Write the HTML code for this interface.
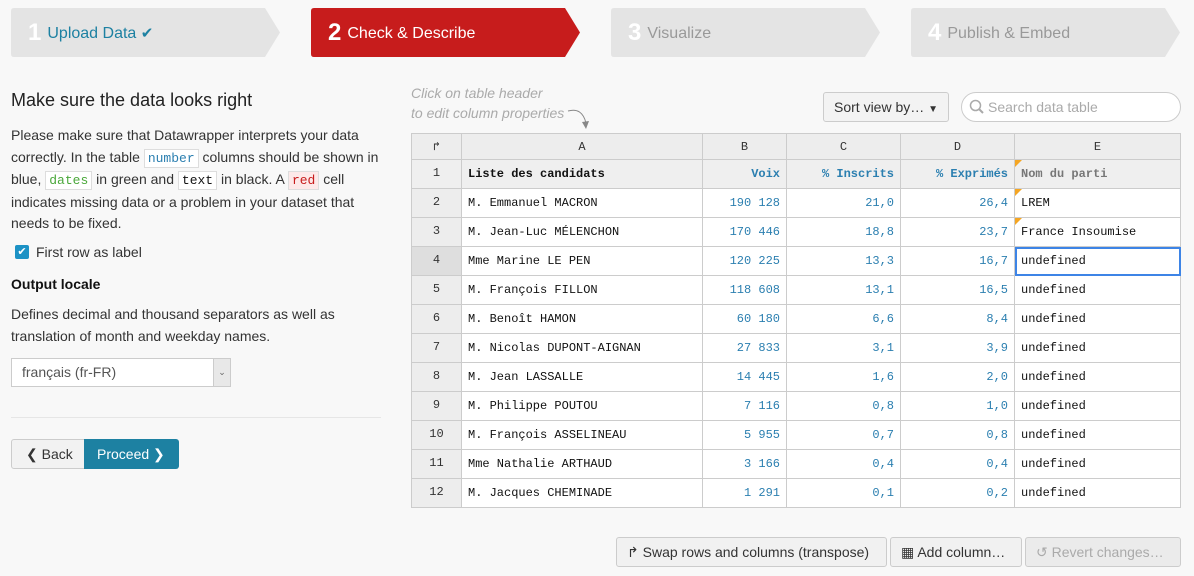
<!DOCTYPE html>
<html><head><meta charset="utf-8"><style>
*{box-sizing:border-box}
body{margin:0;width:1194px;height:576px;background:#f8f8f8;font-family:"Liberation Sans",sans-serif;color:#333;position:relative;overflow:hidden}
.step{position:absolute;top:8px;height:49px;width:269px}
.step svg{position:absolute;left:0;top:0}
.step .t{position:absolute;left:17px;top:0;line-height:50px;font-size:16px;white-space:nowrap}
.step .n{font-size:24px;font-weight:bold;color:#fff;margin-right:6px;vertical-align:-2px}
.g .t{color:#999}
.abs{position:absolute}
code{font-family:"Liberation Mono",monospace;font-size:13px;border:1px solid #ddd;background:#fff;padding:1px 3px}
table{position:absolute;left:411px;top:133px;border-collapse:collapse;font-family:"Liberation Mono",monospace;font-size:12px;table-layout:fixed}
td{border:1px solid #ccc;height:29px;padding:0 6px;background:#fff;color:#111;white-space:nowrap;position:relative}
tr.h td{height:26px;background:#ededed;text-align:center;color:#333}
td.rn{background:#ededed;text-align:center;color:#333;vertical-align:top;padding-top:6px}
td.num{color:#2b7fb0;text-align:right}
tr.r1 td{background:#efefef;font-weight:bold}
tr.r1 td.num{color:#2b7fb0}
.tri{position:absolute;left:0;top:0;width:0;height:0;border-top:7px solid #f5a623;border-right:7px solid transparent}
.btn{position:absolute;height:30px;border:1px solid #ccc;border-radius:3px;background:#f1f1f1;font-size:14px;line-height:28px;padding:0 10px;color:#333;white-space:nowrap}
</style></head><body>

<div class="step" style="left:11px"><svg width="270" height="50"><path d="M3 0H254L269 24.5L254 49H3Q0 49 0 46V3Q0 0 3 0Z" fill="#e4e4e4"/></svg><div class="t" style="color:#1d81a2"><span class="n">1</span>Upload Data <span style="font-size:15px">✔</span></div></div>
<div class="step" style="left:311px"><svg width="270" height="50"><path d="M3 0H254L269 24.5L254 49H3Q0 49 0 46V3Q0 0 3 0Z" fill="#c71c1c"/></svg><div class="t" style="color:#fff"><span class="n">2</span>Check &amp; Describe</div></div>
<div class="step g" style="left:611px"><svg width="270" height="50"><path d="M3 0H254L269 24.5L254 49H3Q0 49 0 46V3Q0 0 3 0Z" fill="#e4e4e4"/></svg><div class="t"><span class="n">3</span>Visualize</div></div>
<div class="step g" style="left:911px"><svg width="270" height="50"><path d="M3 0H254L269 24.5L254 49H3Q0 49 0 46V3Q0 0 3 0Z" fill="#e4e4e4"/></svg><div class="t"><span class="n">4</span>Publish &amp; Embed</div></div>

<div class="abs" style="left:11px;top:90px;font-size:18px;color:#222">Make sure the data looks right</div>
<div class="abs" style="left:11px;top:125px;width:375px;font-size:14px;line-height:21.5px;color:#333">Please make sure that Datawrapper interprets your data correctly. In the table <code style="color:#2b7fb0">number</code> columns should be shown in blue, <code style="color:#4aa83a">dates</code> in green and <code style="color:#111">text</code> in black. A <code style="color:#c71c1c;background:#fde9e9">red</code> cell indicates missing data or a problem in your dataset that needs to be fixed.</div>
<div class="abs" style="left:15px;top:245px;width:14px;height:14px;background:#1d92c5;border-radius:2px;color:#fff;font-size:11px;line-height:14px;text-align:center">✔</div>
<div class="abs" style="left:36px;top:244px;font-size:14px">First row as label</div>
<div class="abs" style="left:11px;top:276px;font-size:14px;font-weight:bold;color:#111">Output locale</div>
<div class="abs" style="left:11px;top:304px;font-size:14px;line-height:21.5px">Defines decimal and thousand separators as well as<br>translation of month and weekday names.</div>
<div class="abs" style="left:11px;top:358px;width:220px;height:29px;border:1px solid #ccc;background:#fff;font-size:14px;line-height:27px;padding-left:10px;color:#555">français (fr-FR)<div class="abs" style="right:0;top:0;width:17px;height:27px;background:#e8e8e8;border-left:1px solid #ccc;font-size:9px;text-align:center;color:#666">⌄</div></div>
<div class="abs" style="left:11px;top:417px;width:370px;border-top:1px solid #e6e6e6"></div>
<div class="abs" style="left:11px;top:439px;width:74px;height:30px;border:1px solid #ccc;border-radius:3px 0 0 3px;background:#f2f2f2;font-size:14px;line-height:28px;padding-left:14px">❮ Back</div>
<div class="abs" style="left:84px;top:439px;width:95px;height:30px;border-radius:0 3px 3px 0;background:#1d81a2;color:#fff;font-size:14px;line-height:30px;padding-left:13px">Proceed ❯</div>

<div class="abs" style="left:411px;top:83px;font-size:14px;line-height:20px;color:#aaa;font-style:italic">Click on table header<br>to edit column properties</div>
<svg class="abs" style="left:566px;top:105px" width="28" height="26"><path d="M2 6Q16 2 20 18" stroke="#888" fill="none"/><path d="M16 17L20 24L23 16Z" fill="#888"/></svg>
<div class="btn" style="left:823px;top:92px;height:30px;background:#f3f3f3">Sort view by… <span style="font-size:10px">▼</span></div>
<div class="abs" style="left:961px;top:92px;width:220px;height:30px;border:1px solid #ccc;border-radius:15px;background:#fff;font-size:14px;line-height:28px;padding-left:26px;color:#aaa">Search data table
<svg class="abs" style="left:7px;top:6px" width="16" height="16"><circle cx="6.5" cy="6.5" r="5" stroke="#aaa" stroke-width="1.5" fill="none"/><path d="M10 10L14 14" stroke="#aaa" stroke-width="2"/></svg></div>

<table>
<colgroup><col style="width:50px"><col style="width:241px"><col style="width:84px"><col style="width:114px"><col style="width:114px"><col style="width:166px"></colgroup>
<tr class="h"><td>↱</td><td>A</td><td>B</td><td>C</td><td>D</td><td>E</td></tr>
<tr class="r1"><td class="rn" style="font-weight:normal">1</td><td>Liste des candidats</td><td class="num">Voix</td><td class="num">% Inscrits</td><td class="num">% Exprimés</td><td style="color:#777"><span class="tri"></span>Nom du parti</td></tr>
<tr><td class="rn">2</td><td>M. Emmanuel MACRON</td><td class="num">190 128</td><td class="num">21,0</td><td class="num">26,4</td><td><span class="tri"></span>LREM</td></tr>
<tr><td class="rn">3</td><td>M. Jean-Luc MÉLENCHON</td><td class="num">170 446</td><td class="num">18,8</td><td class="num">23,7</td><td><span class="tri"></span>France Insoumise</td></tr>
<tr><td class="rn" style="background:#dedede">4</td><td>Mme Marine LE PEN</td><td class="num">120 225</td><td class="num">13,3</td><td class="num">16,7</td><td style="outline:2px solid #3d84e6;outline-offset:-2px">undefined</td></tr>
<tr><td class="rn">5</td><td>M. François FILLON</td><td class="num">118 608</td><td class="num">13,1</td><td class="num">16,5</td><td>undefined</td></tr>
<tr><td class="rn">6</td><td>M. Benoît HAMON</td><td class="num">60 180</td><td class="num">6,6</td><td class="num">8,4</td><td>undefined</td></tr>
<tr><td class="rn">7</td><td>M. Nicolas DUPONT-AIGNAN</td><td class="num">27 833</td><td class="num">3,1</td><td class="num">3,9</td><td>undefined</td></tr>
<tr><td class="rn">8</td><td>M. Jean LASSALLE</td><td class="num">14 445</td><td class="num">1,6</td><td class="num">2,0</td><td>undefined</td></tr>
<tr><td class="rn">9</td><td>M. Philippe POUTOU</td><td class="num">7 116</td><td class="num">0,8</td><td class="num">1,0</td><td>undefined</td></tr>
<tr><td class="rn">10</td><td>M. François ASSELINEAU</td><td class="num">5 955</td><td class="num">0,7</td><td class="num">0,8</td><td>undefined</td></tr>
<tr><td class="rn">11</td><td>Mme Nathalie ARTHAUD</td><td class="num">3 166</td><td class="num">0,4</td><td class="num">0,4</td><td>undefined</td></tr>
<tr><td class="rn">12</td><td>M. Jacques CHEMINADE</td><td class="num">1 291</td><td class="num">0,1</td><td class="num">0,2</td><td>undefined</td></tr>
</table>

<div class="btn" style="left:616px;top:537px;width:271px">↱ Swap rows and columns (transpose)</div>
<div class="btn" style="left:890px;top:537px;width:132px">▦ Add column…</div>
<div class="btn" style="left:1025px;top:537px;width:156px;color:#aaa;background:#ebebeb">↺ Revert changes…</div>
</body></html>
